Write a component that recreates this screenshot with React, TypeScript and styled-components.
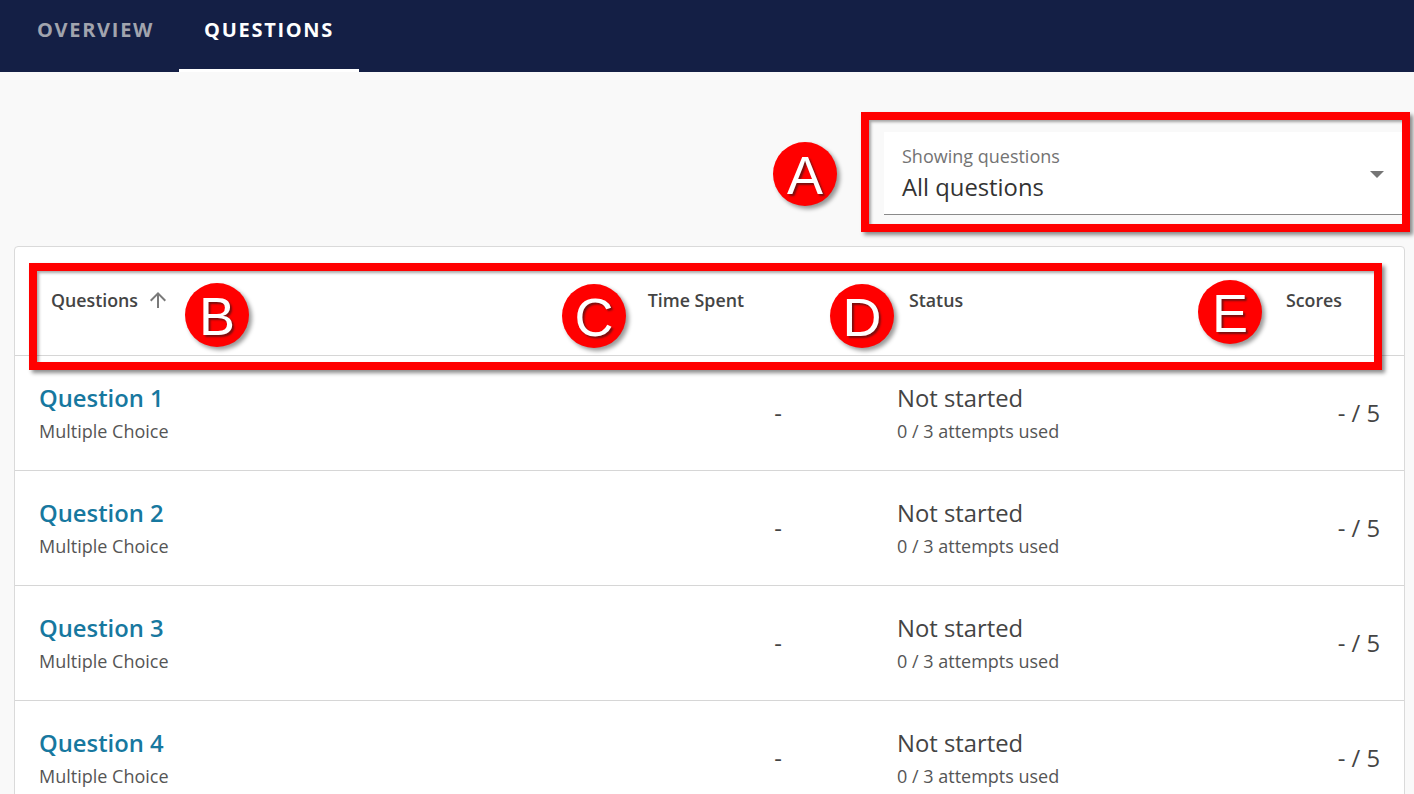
import React from 'react';
import styled, { createGlobalStyle } from 'styled-components';

const GlobalStyle = createGlobalStyle`
  html, body {
    margin: 0;
    padding: 0;
    background: #f9f9f9;
    font-family: 'Open Sans', 'Noto Sans', sans-serif;
    color: #444;
  }
  * { box-sizing: border-box; }
`;

const Page = styled.div`
  position: relative;
  width: 1414px;
  height: 794px;
  overflow: hidden;
`;

const NavBar = styled.nav`
  height: 72px;
  background: #141f45;
  display: flex;
  align-items: stretch;
  padding-left: 12px;
`;

const Tab = styled.div<{ $active?: boolean }>`
  display: flex;
  align-items: center;
  padding: 0 25px 10px;
  font-size: 20px;
  font-weight: 700;
  letter-spacing: 1.7px;
  text-transform: uppercase;
  color: ${(p) => (p.$active ? '#ffffff' : '#a1a4ae')};
  border-bottom: 3px solid ${(p) => (p.$active ? '#ffffff' : 'transparent')};
`;

const Main = styled.main`
  padding: 60px 9px 0 14px;
`;

const FilterRow = styled.div`
  display: flex;
  justify-content: flex-end;
  margin-bottom: 31px;
`;

const Select = styled.div`
  width: 521px;
  height: 83px;
  background: #ffffff;
  border-bottom: 1px solid #8a8a8a;
  padding: 12px 18px 0;
  position: relative;
`;

const SelectLabel = styled.div`
  font-size: 18px;
  color: #737373;
  line-height: 25px;
`;

const SelectValue = styled.div`
  font-size: 23.8px;
  color: #333;
  line-height: 36px;
`;

const Caret = styled.span`
  position: absolute;
  right: 21px;
  top: 39px;
  width: 0;
  height: 0;
  border-left: 7px solid transparent;
  border-right: 7px solid transparent;
  border-top: 7px solid #757575;
`;

const Card = styled.section`
  background: #ffffff;
  border: 1px solid #dadada;
  border-radius: 4px;
`;

const Grid = styled.div`
  display: grid;
  grid-template-columns: minmax(0, 1fr) 200px 398px 200px;
  padding: 0 24px;
  border-bottom: 1px solid #d6d6d6;
`;

const HeaderRow = styled(Grid)`
  height: 109px;
  align-items: center;
  padding-bottom: 3px;
`;

const HeaderCell = styled.div<{ $right?: boolean; $indent?: number }>`
  display: flex;
  align-items: center;
  justify-content: ${(p) => (p.$right ? 'flex-end' : 'flex-start')};
  gap: 8px;
  padding-left: ${(p) => (p.$right ? 0 : 12 + (p.$indent ?? 0))}px;
  padding-right: ${(p) => (p.$right ? 6 : 0)}px;
  font-size: 17.8px;
  font-weight: 600;
  color: #444;
`;

const SortIcon = styled.svg<{ $hidden?: boolean }>`
  width: 24px;
  height: 24px;
  fill: #7a7a7a;
  visibility: ${(p) => (p.$hidden ? 'hidden' : 'visible')};
`;

const Row = styled(Grid)`
  height: 115px;
  align-items: center;
`;

const Cell = styled.div<{ $right?: boolean; $indent?: number }>`
  display: flex;
  flex-direction: column;
  align-items: ${(p) => (p.$right ? 'flex-end' : 'flex-start')};
  padding-left: ${(p) => p.$indent ?? 0}px;
`;

const Title = styled.a`
  font-size: 23.8px;
  font-weight: 600;
  color: #17789f;
  line-height: 32px;
  text-decoration: none;
`;

const Primary = styled.span`
  font-size: 23.8px;
  color: #444;
  line-height: 32px;
`;

const Secondary = styled.span`
  font-size: 18px;
  color: #555;
  line-height: 26px;
  margin-top: 4px;
`;

const Frame = styled.div<{ $x: number; $y: number; $w: number; $h: number }>`
  position: absolute;
  left: ${(p) => p.$x}px;
  top: ${(p) => p.$y}px;
  width: ${(p) => p.$w}px;
  height: ${(p) => p.$h}px;
  border: 8px solid #ff0000;
  box-shadow: 3px 3px 4px rgba(0, 0, 0, 0.45), inset 2px 2px 3px rgba(0, 0, 0, 0.35);
  pointer-events: none;
`;

const Marker = styled.div<{ $x: number; $y: number }>`
  position: absolute;
  left: ${(p) => p.$x - 32}px;
  top: ${(p) => p.$y - 32}px;
  width: 64px;
  height: 64px;
  border-radius: 50%;
  background: #ff0000;
  box-shadow: 3px 3px 4px rgba(0, 0, 0, 0.4);
  display: flex;
  align-items: center;
  justify-content: center;
  font-family: 'Liberation Sans', Arial, sans-serif;
  font-size: 54px;
  line-height: 1;
  color: #ffffff;
  text-shadow: 2px 2px 2px #7a0f0f;
  padding-top: 2px;
`;

const ArrowUp = ({ hidden }: { hidden?: boolean }) => (
  <SortIcon $hidden={hidden} viewBox="0 0 24 24">
    <path d="M4 12l1.41 1.41L11 7.83V20h2V7.83l5.58 5.59L20 12l-8-8-8 8z" />
  </SortIcon>
);

const questions = [1, 2, 3, 4];

const markers = [
  { label: 'A', x: 805, y: 174 },
  { label: 'B', x: 217, y: 315 },
  { label: 'C', x: 594, y: 316 },
  { label: 'D', x: 862, y: 316 },
  { label: 'E', x: 1230, y: 312 },
];

export default function App() {
  return (
    <Page>
      <GlobalStyle />
      <NavBar>
        <Tab>Overview</Tab>
        <Tab $active>Questions</Tab>
      </NavBar>

      <Main>
        <FilterRow>
          <Select>
            <SelectLabel>Showing questions</SelectLabel>
            <SelectValue>All questions</SelectValue>
            <Caret />
          </Select>
        </FilterRow>

        <Card>
          <HeaderRow>
            <HeaderCell>
              Questions
              <ArrowUp />
            </HeaderCell>
            <HeaderCell $right>
              Time Spent
              <ArrowUp hidden />
            </HeaderCell>
            <HeaderCell $indent={115}>Status</HeaderCell>
            <HeaderCell $right>
              Scores
              <ArrowUp hidden />
            </HeaderCell>
          </HeaderRow>

          {questions.map((n) => (
            <Row key={n}>
              <Cell>
                <Title href="#">Question {n}</Title>
                <Secondary>Multiple Choice</Secondary>
              </Cell>
              <Cell $right>
                <Primary>-</Primary>
              </Cell>
              <Cell $indent={115}>
                <Primary>Not started</Primary>
                <Secondary>0 / 3 attempts used</Secondary>
              </Cell>
              <Cell $right>
                <Primary>- / 5</Primary>
              </Cell>
            </Row>
          ))}
        </Card>
      </Main>

      <Frame $x={861} $y={112} $w={549} $h={120} />
      <Frame $x={29} $y={263} $w={1353} $h={107} />
      {markers.map((m) => (
        <Marker key={m.label} $x={m.x} $y={m.y}>
          {m.label}
        </Marker>
      ))}
    </Page>
  );
}
